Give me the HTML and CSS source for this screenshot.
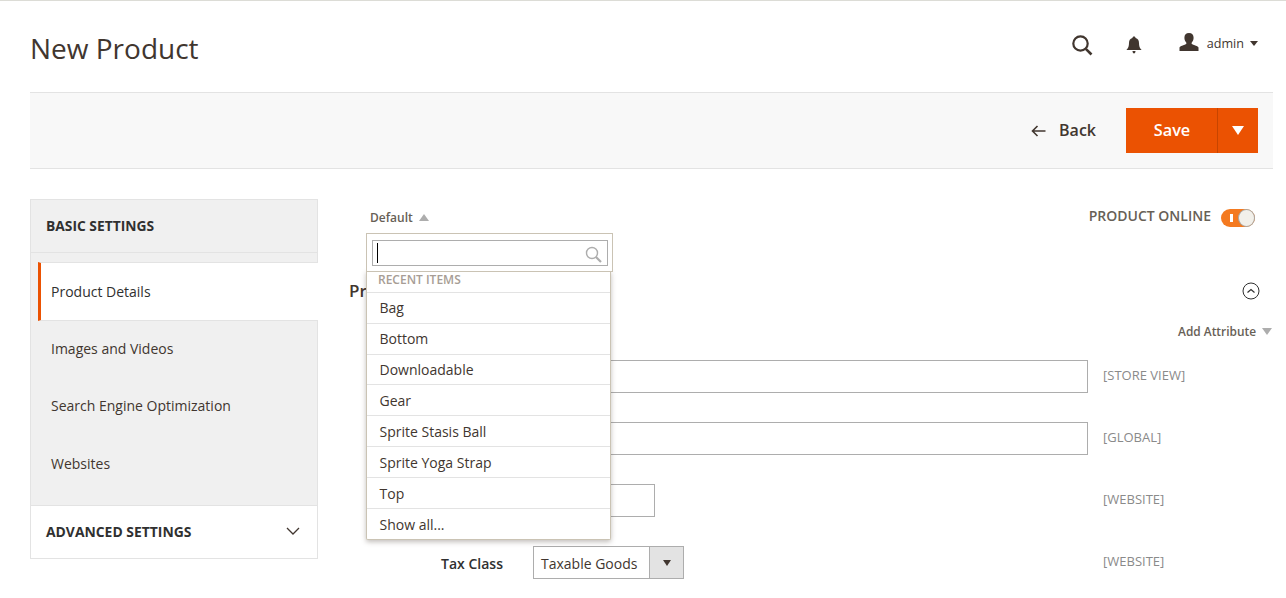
FILE: index.html
```html
<!DOCTYPE html>
<html lang="en">
<head>
<meta charset="utf-8">
<title>New Product</title>
<link rel="stylesheet" href="styles.css">
</head>
<body>
<header class="page-header">
  <h1 class="page-title">New Product</h1>
  <div class="header-tools">
    <svg class="icon-search" width="22" height="22" viewBox="0 0 22 22"><circle cx="9.5" cy="9.5" r="7.2" fill="none" stroke="#41362f" stroke-width="2.2"/><path d="M14.8 14.8L20.5 20.5" stroke="#41362f" stroke-width="2.6" fill="none"/></svg>
    <svg class="icon-bell" width="16" height="18" viewBox="0 0 16 18"><path d="M8 0.5c1 0 1.5.7 1.6 1.5C12 2.7 13 4.6 13 7c0 3 .6 5 2.6 7H.4C2.400 12 3 10 3 7c0-2.400 1-4.300 3.400-5C6.500 1.200 7 .5 8 .5z" fill="#41362f"/><path d="M6.500 15h3c0 1.500-.7 2.500-1.500 2.500S6.500 16.500 6.500 15z" fill="#41362f"/></svg>
    <div class="user">
      <svg class="icon-user" width="20" height="18" viewBox="0 0 20 18"><path d="M10 0c3 0 4.600 2 4.600 4.800 0 2-.8 3.700-1.800 4.700-.4.500-.3 1.300.4 1.700 1.800.9 5.800 1.700 6.300 3.300V18H.5v-3.500c.5-1.600 4.500-2.400 6.300-3.300.7-.4.800-1.200.4-1.700-1-1-1.800-2.700-1.800-4.700C5.400 2 7 0 10 0z" fill="#41362f"/></svg>
      <span class="user-name">admin</span>
      <span class="caret caret-user"></span>
    </div>
  </div>
</header>

<div class="action-bar">
  <a class="back"><svg width="15" height="12" viewBox="0 0 15 12"><path d="M14.500 6H1.500M6.500 1L1.500 6l5 5" fill="none" stroke="#41362f" stroke-width="1.600"/></svg><span>Back</span></a>
  <div class="save-group">
    <span class="save-main">Save</span>
    <span class="save-toggle"><span class="caret caret-save"></span></span>
  </div>
</div>

<div class="content">
  <aside class="sidebar">
    <div class="side-head">BASIC SETTINGS</div>
    <ul class="side-list">
      <li class="side-item active">Product Details</li>
      <li class="side-item">Images and Videos</li>
      <li class="side-item">Search Engine Optimization</li>
      <li class="side-item">Websites</li>
    </ul>
    <div class="side-foot">
      <span>ADVANCED SETTINGS</span>
      <svg width="14" height="8" viewBox="0 0 14 8"><path d="M1 1l6 6 6-6" fill="none" stroke="#41362f" stroke-width="1.300"/></svg>
    </div>
  </aside>

  <main class="main">
    <div class="top-row">
      <div class="attr-set">
        <span>Default</span><span class="caret caret-up"></span>
        <div class="dropdown">
          <div class="search-box">
            <div class="search-input">
              <span class="text-cursor"></span>
              <svg width="17" height="17" viewBox="0 0 17 17"><circle cx="7" cy="7" r="5.500" fill="none" stroke="#adadad" stroke-width="1.400"/><path d="M11 11l5 5" stroke="#adadad" stroke-width="2.200" fill="none"/></svg>
            </div>
          </div>
          <div class="menu">
            <div class="menu-label">RECENT ITEMS</div>
            <div class="menu-item">Bag</div>
            <div class="menu-item">Bottom</div>
            <div class="menu-item menu-item-short">Downloadable</div>
            <div class="menu-item menu-item-low">Gear</div>
            <div class="menu-item menu-item-low">Sprite Stasis Ball</div>
            <div class="menu-item menu-item-low">Sprite Yoga Strap</div>
            <div class="menu-item menu-item-low">Top</div>
            <div class="menu-item menu-item-low">Show all...</div>
          </div>
        </div>
      </div>
      <div class="online">
        <span>PRODUCT ONLINE</span>
        <span class="toggle"><span class="toggle-bar"></span><span class="toggle-knob"></span></span>
      </div>
    </div>

    <div class="section-head">
      <h2 class="section-title">Pr</h2>
      <svg width="18" height="18" viewBox="0 0 18 18"><circle cx="9" cy="9" r="8" fill="none" stroke="#303030" stroke-width="1"/><path d="M5.500 10.500L9 7.500l3.500 3" fill="none" stroke="#303030" stroke-width="1.200"/></svg>
    </div>

    <div class="add-attr"><span>Add Attribute</span><span class="caret caret-attr"></span></div>

    <div class="fields">
      <div class="field">
        <span class="field-label"></span>
        <div class="field-control"><span class="input input-wide"></span></div>
        <span class="scope">[STORE VIEW]</span>
      </div>
      <div class="field">
        <span class="field-label"></span>
        <div class="field-control"><span class="input input-wide"></span></div>
        <span class="scope">[GLOBAL]</span>
      </div>
      <div class="field">
        <span class="field-label"></span>
        <div class="field-control"><span class="input input-short"></span></div>
        <span class="scope">[WEBSITE]</span>
      </div>
      <div class="field">
        <span class="field-label">Tax Class</span>
        <div class="field-control">
          <div class="select"><span class="select-value">Taxable Goods</span><span class="select-btn"><span class="caret caret-select"></span></span></div>
        </div>
        <span class="scope">[WEBSITE]</span>
      </div>
    </div>
  </main>
</div>
</body>
</html>
```
FILE: styles.css
```css
* { box-sizing: border-box; }
html, body { margin: 0; padding: 0; }
body {
  width: 1286px;
  height: 598px;
  overflow: hidden;
  background: #fff;
  border-top: 1px solid #dcdcd6;
  font-family: "Open Sans", sans-serif;
  font-size: 14px;
  color: #41362f;
}
.page-header {
  height: 91px;
  padding: 0 28px 0 30px;
  display: flex;
  align-items: center;
  justify-content: space-between;
}
.page-title {
  margin: 0;
  padding-top: 2px;
  font-size: 28px;
  font-weight: 400;
  line-height: 36px;
}
.header-tools { display: flex; align-items: center; margin-top: -7px; }
.icon-search { margin-right: 33px; margin-top: 3px; }
.icon-bell { margin-right: 37px; margin-top: 4px; }
.user { display: flex; align-items: center; }
.icon-user { margin-right: 8px; margin-top: -2px; }
.user-name { font-size: 12.600px; line-height: 18px; padding-top: 2px; margin-right: 6px; }
.caret { display: inline-block; width: 0; height: 0; border-style: solid; border-color: transparent; }
.caret-user { border-width: 5px 4px 0; border-top-color: #41362f; }

.action-bar {
  margin-left: 30px;
  width: 1243px;
  height: 77px;
  padding-right: 15px;
  background: #f8f8f8;
  border-top: 1px solid #e3e3e3;
  border-bottom: 1px solid #e3e3e3;
  display: flex;
  align-items: center;
  justify-content: flex-end;
}
.back {
  display: flex;
  align-items: center;
  font-size: 16px;
  font-weight: 600;
  margin-right: 30px;
}
.back span { padding-bottom: 2px; }
.back svg { margin-right: 13px; }
.save-group { display: flex; height: 45px; background: #eb5202; color: #fff; }
.save-main {
  width: 92px;
  padding: 0 0 2px 1px;
  display: flex;
  align-items: center;
  justify-content: center;
  font-size: 16.300px;
  font-weight: 600;
  border-right: 1px solid #c74500;
}
.save-toggle { width: 40px; display: flex; align-items: center; justify-content: center; }
.caret-save { border-width: 9px 6px 0; border-top-color: #fff; }

.content {
  display: flex;
  align-items: flex-start;
  padding: 30px 0 0 30px;
}
.sidebar { width: 288px; flex: none; }
.side-head {
  height: 54px;
  padding: 0 0 2px 15px;
  display: flex;
  align-items: center;
  background: #f0f0f0;
  border: 1px solid #e3e3e3;
  font-size: 13.800px;
  font-weight: 700;
  color: #303030;
}
.side-list {
  list-style: none;
  margin: 0;
  padding: 9px 0 0;
  background: #f0f0f0;
  border-left: 1px solid #e3e3e3;
  border-right: 1px solid #e3e3e3;
  height: 252px;
  color: #41362f;
}
.side-item {
  height: 57.500px;
  padding: 0 0 3px 20px;
  display: flex;
  align-items: center;
  font-size: 14px;
}
.side-item.active {
  height: 59px;
  margin: 0 -1px 0 7px;
  padding: 0 0 0 10px;
  background: #fff;
  border-left: 3px solid #eb5202;
  border-top: 1px solid #e3e3e3;
  border-bottom: 1px solid #e3e3e3;
  color: #303030;
  font-weight: 400;
}
.side-foot {
  height: 54px;
  padding: 0 17px 2px 15px;
  display: flex;
  align-items: center;
  justify-content: space-between;
  border: 1px solid #e3e3e3;
  font-size: 13.900px;
  font-weight: 700;
  color: #303030;
}

.main { width: 955px; flex: none; padding-left: 31px; }
.top-row {
  display: flex;
  justify-content: space-between;
  align-items: flex-start;
  height: 78px;
  padding: 8px 18px 0 21px;
}
.attr-set {
  position: relative;
  font-size: 12px;
  font-weight: 600;
  line-height: 20px;
  color: #676056;
  padding-top: 1px;
}
.caret-up { border-width: 0 5px 7px; border-bottom-color: #adadad; margin-left: 6px; vertical-align: 1px; }
.dropdown {
  position: absolute;
  left: -4px;
  top: 26px;
  width: 247px;
  z-index: 5;
  font-weight: 400;
}
.search-box {
  position: relative;
  z-index: 1;
  height: 39px;
  padding: 6px 4px 5px 5px;
  background: #fff;
  border: 1px solid #cac3b4;
}
.search-input {
  height: 26px;
  padding: 0 5px 0 4px;
  border: 1px solid #adadad;
  display: flex;
  align-items: center;
  justify-content: space-between;
}
.text-cursor { width: 1px; height: 20px; background: #000; }
.search-input svg { margin-top: 3px; }
.menu {
  width: 245px;
  margin-top: -1px;
  background: #fff;
  border: 1px solid #cac3b4;
  border-top: 0;
  border-radius: 0 0 2px 2px;
  box-shadow: 0 2px 5px rgba(80, 70, 60, .35);
}
.menu-label {
  height: 21px;
  padding: 0 11px 4px;
  display: flex;
  align-items: center;
  font-size: 12px;
  font-weight: 600;
  color: #a79d95;
  border-top: 1px solid #e3e3e3;
}
.menu-item {
  height: 31px;
  padding: 0 13px 0 12.500px;
  display: flex;
  align-items: center;
  font-size: 14px;
  color: #41362f;
  border-top: 1px solid #e3e3e3;
}
.menu-item-short { height: 30px; }
.menu-item-low { padding-top: 2px; }
.online {
  display: flex;
  align-items: flex-start;
  margin-top: -1px;
  font-size: 14px;
  font-weight: 600;
  color: #676056;
  line-height: 20px;
}
.toggle { position: relative; display: block; width: 34px; height: 18px; margin: 3px 0 0 10px; border-radius: 9px; background: #f47a20; }
.toggle-bar { position: absolute; left: 9px; top: 5px; width: 3px; height: 8px; background: #fff; }
.toggle-knob { position: absolute; right: 0; top: 0; width: 17px; height: 18px; border-radius: 50%; background: #f2f0ea; border: 1px solid #aaa6a0; }

.section-head {
  display: flex;
  align-items: center;
  justify-content: space-between;
  height: 28px;
  padding-right: 13px;
}
.section-title {
  margin: 0;
  font-size: 17px;
  font-weight: 600;
  color: #41362f;
  line-height: 24px;
}
.add-attr {
  display: flex;
  align-items: center;
  justify-content: flex-end;
  height: 20px;
  margin-top: 16px;
  padding-right: 1px;
  font-size: 11.900px;
  font-weight: 600;
  color: #676056;
}
.caret-attr { border-width: 7px 5px 0; border-top-color: #adadad; margin-left: 6px; }

.fields { margin-top: 19px; display: flex; flex-direction: column; gap: 29px; }
.field { display: flex; align-items: center; height: 33px; }
.field-label { width: 154px; padding-top: 2px; text-align: right; font-weight: 600; font-size: 14px; color: #303030; flex: none; }
.field-control { width: 555px; margin-left: 30px; flex: none; }
.input { display: block; height: 33px; background: #fff; border: 1px solid #adadad; }
.input-short { width: 122px; }
.select { display: flex; width: 151px; height: 33px; border: 1px solid #adadad; }
.select-value { flex: 1; padding: 1px 0 0 7px; line-height: 31px; font-size: 14px; color: #41362f; }
.select-btn { width: 34px; display: flex; align-items: center; justify-content: center; background: #e3e3e3; border-left: 1px solid #adadad; }
.caret-select { border-width: 6px 4px 0; border-top-color: #41362f; }
.scope { margin: 0 0 4px 15px; font-size: 13px; color: #8a8a8a; }
```
